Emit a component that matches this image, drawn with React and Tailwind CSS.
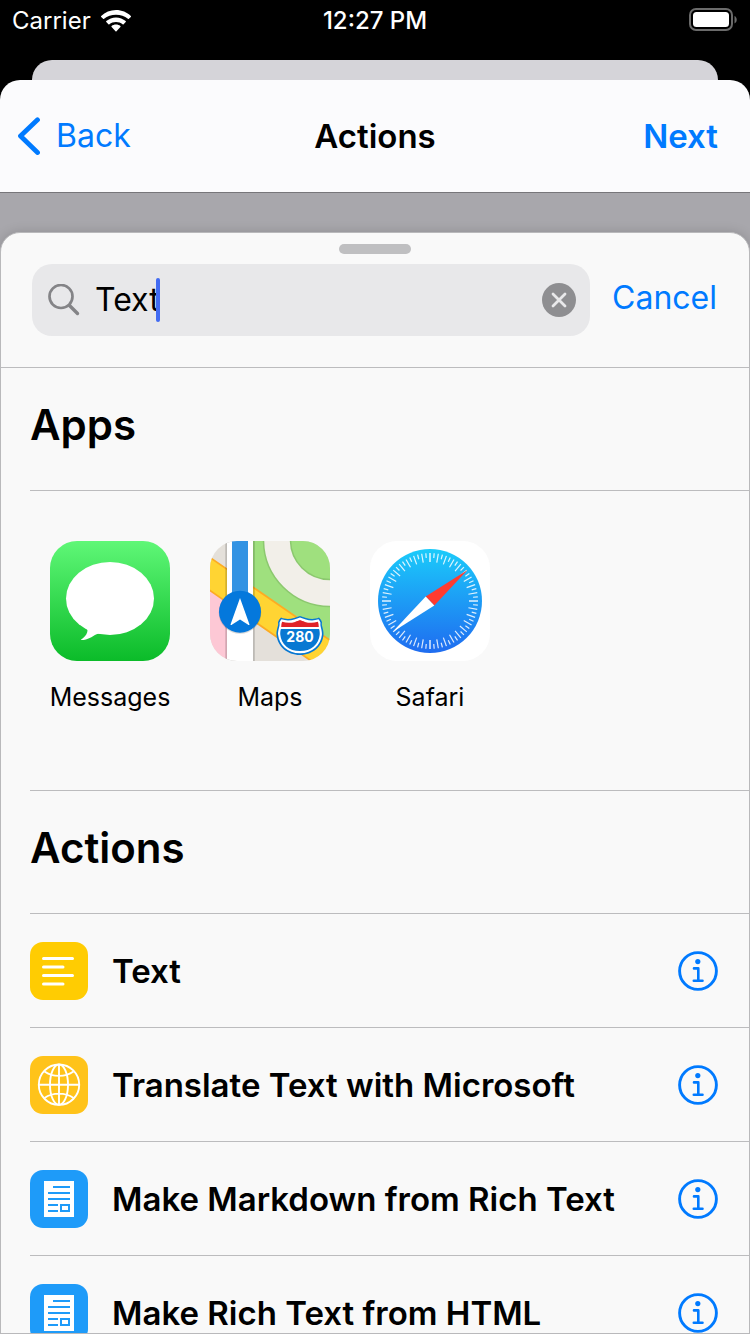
import { useState } from "react";

function WifiIcon() {
  return (
    <svg width="30" height="22" viewBox="0 0 30 22" fill="#fff" aria-hidden="true">
      <path d="M15 0C9.300 0 4 2.200 0.200 5.900a0.700 0.700 0 0 0 0 1l1.900 1.900a0.700 0.700 0 0 0 1 0C6.300 5.800 10.500 4.700 15 4.700s8.700 1.100 11.900 4.100a0.700 0.700 0 0 0 1 0l1.900-1.900a0.700 0.700 0 0 0 0-1C26 2.200 20.700 0 15 0Z" />
      <path d="M15 7.400c-3.700 0-7.100 1.400-9.700 3.700a0.700 0.700 0 0 0 0 1l2.100 2.100a0.700 0.700 0 0 0 1 0c1.800-1.600 4-2.300 6.600-2.300s4.800 0.700 6.600 2.300a0.700 0.700 0 0 0 1 0l2.100-2.100a0.700 0.700 0 0 0 0-1C22.100 8.800 18.700 7.400 15 7.400Z" />
      <path d="M15 14.600c-1.700 0-3.200 0.500-4.400 1.500a0.700 0.700 0 0 0 0 1l3.900 4.100a0.700 0.700 0 0 0 1 0l3.900-4.100a0.700 0.700 0 0 0 0-1c-1.200-1-2.700-1.500-4.400-1.500Z" />
    </svg>
  );
}

function BatteryIcon() {
  return (
    <svg width="49" height="24" viewBox="0 0 49 24" aria-hidden="true">
      <rect x="1" y="1" width="42" height="21" rx="6" fill="none" stroke="#6b6b6b" strokeWidth="2" />
      <rect x="4" y="4" width="36" height="15" rx="3.500" fill="#fff" />
      <path d="M45.500 8v7.500c1.400-0.600 2.200-2 2.200-3.700s-0.800-3.200-2.200-3.800Z" fill="#6b6b6b" />
    </svg>
  );
}

function SearchIcon() {
  return (
    <svg width="32" height="32" viewBox="0 0 32 32" fill="none" stroke="#848487" aria-hidden="true">
      <circle cx="13" cy="12.500" r="11.500" strokeWidth="2.700" />
      <path d="M21.500 21.500 29.500 29.500" strokeWidth="3.400" strokeLinecap="round" />
    </svg>
  );
}

function InfoIcon() {
  return (
    <svg width="40" height="40" viewBox="0 0 40 40" fill="none" stroke="#007aff" aria-hidden="true">
      <circle cx="20" cy="20" r="18.400" strokeWidth="2.900" />
      <circle cx="19.800" cy="10.600" r="2.600" fill="#007aff" stroke="none" />
      <path d="M16 17.400h4.300v12.300M15.800 29.700h8.700" strokeWidth="2.600" strokeLinecap="round" strokeLinejoin="round" />
    </svg>
  );
}

function MessagesIcon() {
  return (
    <svg width="120" height="120" viewBox="0 0 120 120" aria-hidden="true">
      <defs>
        <linearGradient id="msg" x1="0" y1="0" x2="0" y2="1">
          <stop offset="0" stopColor="#5ff777" />
          <stop offset="1" stopColor="#0bbb29" />
        </linearGradient>
      </defs>
      <rect width="120" height="120" rx="27" fill="url(#msg)" />
      <ellipse cx="60" cy="57.500" rx="44" ry="36.500" fill="#fff" />
      <path d="M35 86c2.400 1.700 2.900 3 2.200 5.200-0.900 3-3.200 5.600-6 7.200-0.500 0.300-0.300 0.700 0.300 0.700 6.500-0.300 10.500-3.500 14.500-5.700 1.300-0.700 2.300-0.900 4-0.500L48 84Z" fill="#fff" />
    </svg>
  );
}

function MapsIcon() {
  return (
    <svg width="120" height="120" viewBox="0 0 120 120" aria-hidden="true">
      <defs>
        <clipPath id="mapClip">
          <rect width="120" height="120" rx="27" />
        </clipPath>
      </defs>
      <g clipPath="url(#mapClip)">
        <rect width="120" height="120" fill="#e4e0da" />
        <path d="M43 0h77v99.500L43 46Z" fill="#9fe07e" />
        <circle cx="120" cy="-1" r="53" fill="none" stroke="#8cc86f" strokeWidth="28.500" />
        <circle cx="120" cy="-1" r="53" fill="none" stroke="#f2efe9" strokeWidth="25.500" />
        <path d="M0 49h17v71H0Z" fill="#fdc8d5" />
        <path d="M-2 15.100 122 100.700v33.700L-2 48.100Z" fill="#ffd433" stroke="#fdab23" strokeWidth="1.700" />
        <path d="M15.300 0h29.500v120H15.300Z" fill="#000" fillOpacity="0.170" />
        <path d="M17 0h26v120H17Z" fill="#fff" />
        <path d="M22 0h16v60H22Z" fill="#3393e3" />
        <circle cx="30" cy="71.500" r="21.300" fill="#000" fillOpacity="0.150" />
        <circle cx="30" cy="70.700" r="21" fill="#0478dc" />
        <path d="M30 57 39.500 83.500Q39 84.500 37.800 83.500L30 78.500 22.200 83.500Q21 84.500 20.500 83.500Z" fill="#fff" />
        <path d="M71 76.500c4.200 1.900 9 1.700 13 0.400 2.200-0.700 4-1.400 6-2 2 0.600 3.800 1.300 6 2 4 1.300 8.800 1.500 13-0.400 1.500 1.500 2.500 3 3 5-1 3 2 7 1.500 12.500C112.500 105 103 114 90 114S67.500 105 66.500 94C66 88.500 69 84.500 68 81.500c0.500-2 1.500-3.500 3-5Z" fill="#0878d2" />
        <path d="M71.500 78.300c4.500 1.600 9 1.300 12.700 0.100 2.200-0.700 3.800-1.300 5.800-1.900 2 0.600 3.600 1.200 5.800 1.900 3.700 1.200 8.200 1.500 12.700-0.100 1 1.200 1.600 2.200 2 3.400-0.700 3.500 1.800 7.300 1.400 12C111 103.500 102.500 112.300 90 112.300S69 103.500 68.100 93.700c-0.400-4.700 2.100-8.500 1.400-12 0.400-1.200 1-2.200 2-3.400Z" fill="#fff" />
        <path d="M72.200 80.800c4.600 1.500 9.200 1.200 12.800 0.100 2-0.600 3.300-1.200 5-1.800 1.700 0.600 3 1.200 5 1.800 3.600 1.100 8.200 1.400 12.800-0.100 0.900 1.700 0.800 3.300 1 5.200H71.200c0.200-1.900 0.100-3.500 1-5.200Z" fill="#e02328" />
        <path d="M70.900 88h38.200c0.500 1.800 0.800 3.500 0.600 5.700-0.800 9.300-8.500 16.400-19.700 16.400s-18.900-7.100-19.700-16.400c-0.200-2.200 0.100-3.900 0.600-5.700Z" fill="#0878d2" />
        <text x="90" y="101" textAnchor="middle" fontFamily="Inter, sans-serif" fontWeight="700" fontSize="14" fill="#fff">280</text>
      </g>
    </svg>
  );
}

function SafariIcon() {
  const ticks = Array.from({ length: 72 }, (_, i) => i);
  return (
    <svg width="120" height="120" viewBox="0 0 120 120" aria-hidden="true">
      <defs>
        <linearGradient id="saf" x1="0" y1="0" x2="0" y2="1">
          <stop offset="0" stopColor="#1bcbfa" />
          <stop offset="1" stopColor="#1f6cf0" />
        </linearGradient>
      </defs>
      <rect width="120" height="120" rx="27" fill="#fff" />
      <circle cx="60" cy="60" r="52" fill="url(#saf)" />
      {ticks.map((i) => (
        <path
          key={i}
          d={i % 2 === 0 ? "M60 12V21" : "M60 12V16.800"}
          stroke="#fff"
          strokeOpacity={i % 18 === 0 ? 0.65 : 0.85}
          strokeWidth={i % 18 === 0 ? 2 : 1.2}
          transform={`rotate(${i * 5} 60 60)`}
        />
      ))}
      <path d="M97.500 29 55.700 55.500 64.300 64.500Z" fill="#ff3b30" />
      <path d="M22.500 91 55.700 55.500 64.300 64.500Z" fill="#fff" />
    </svg>
  );
}

function TextGlyph() {
  return (
    <svg width="58" height="58" viewBox="0 0 58 58" aria-hidden="true">
      <rect width="58" height="58" rx="13" fill="#ffcc02" />
      <path d="M13.500 16.500h29M13.500 25h19.500M13.500 33.500h29M13.500 42h19.500" stroke="#fff" strokeWidth="3" strokeLinecap="round" />
    </svg>
  );
}

function GlobeGlyph() {
  return (
    <svg width="58" height="58" viewBox="0 0 58 58" aria-hidden="true">
      <rect width="58" height="58" rx="13" fill="#ffc31a" />
      <g fill="none" stroke="#fff" strokeWidth="1.900">
        <circle cx="29" cy="28.700" r="20.200" />
        <ellipse cx="29" cy="28.700" rx="9" ry="20.200" />
        <path d="M29 8.500v40.400M8.800 28.700h40.400M14.500 15.500c8.200 5.800 20.800 5.800 29 0M14.500 42c8.200-5.800 20.800-5.800 29 0" />
      </g>
    </svg>
  );
}

function DocumentGlyph() {
  return (
    <svg width="58" height="58" viewBox="0 0 58 58" aria-hidden="true">
      <rect width="58" height="58" rx="13" fill="#1e9bf9" />
      <path d="M14 11h30v36H14Z" fill="#fff" />
      <path d="M23 17h17M18 23h22M18 29h22M18 35h10M18 41h10M31 35h8v6h-8Z" fill="none" stroke="#1e9bf9" strokeWidth="2" />
    </svg>
  );
}

const apps = [
  { name: "Messages", Icon: MessagesIcon },
  { name: "Maps", Icon: MapsIcon },
  { name: "Safari", Icon: SafariIcon },
];

const actions = [
  { name: "Text", Icon: TextGlyph },
  { name: "Translate Text with Microsoft", Icon: GlobeGlyph },
  { name: "Make Markdown from Rich Text", Icon: DocumentGlyph },
  { name: "Make Rich Text from HTML", Icon: DocumentGlyph },
];

export default function App() {
  const [query, setQuery] = useState("Text");
  return (
    <div className="flex h-screen flex-col overflow-hidden bg-black font-[Inter,sans-serif] text-black">
      <div className="grid h-[60px] shrink-0 grid-cols-3 items-start px-3 pt-2 text-[24px] leading-[26px] text-white">
        <div className="flex items-center gap-[10px]">
          <span>Carrier</span>
          <WifiIcon />
        </div>
        <time className="text-center font-medium">12:27 PM</time>
        <div className="flex justify-end">
          <BatteryIcon />
        </div>
      </div>

      <div className="mx-8 h-5 shrink-0 rounded-t-[20px] bg-[#d5d4d9]" />

      <header className="grid h-[113px] shrink-0 grid-cols-3 items-center rounded-t-[20px] border-b border-[#77767a] bg-[#fbfbfd] px-4 text-[33px] leading-10">
        <button className="flex items-center gap-4 text-[32px] text-[#007aff]">
          <svg width="24" height="38" viewBox="0 0 24 38" fill="none" stroke="#007aff" strokeWidth="4.800" strokeLinecap="round" strokeLinejoin="round" aria-hidden="true">
            <path d="M21.500 2.800 4.500 19l17 16.500" />
          </svg>
          Back
        </button>
        <h1 className="text-center font-semibold">Actions</h1>
        <button className="pr-4 text-right font-semibold text-[#007aff]">Next</button>
      </header>

      <div className="flex min-h-0 flex-1 flex-col bg-[#a8a7ac] pt-[39px]">
        <main className="min-h-0 flex-1 overflow-hidden rounded-t-[20px] border border-[#b9b9bb] bg-[#f9f9f9] shadow-[0_0_12px_rgba(0,0,0,0.15)]">
          <div className="border-b border-[#bcbcbe] pt-[11px] pb-[31px]">
            <div className="mx-auto h-[10px] w-[72px] rounded-full bg-[#bfbfc1]" />
            <div className="mt-[10px] flex items-center gap-[22px] pr-8 pl-[31px]">
              <div className="relative flex h-[72px] min-w-0 flex-1 items-center gap-[15px] rounded-[20px] bg-[#e8e8ea] pr-[14px] pl-4">
                <SearchIcon />
                <input
                  type="text"
                  aria-label="Search"
                  value={query}
                  onChange={(e) => setQuery(e.target.value)}
                  className="min-w-0 flex-1 bg-transparent text-[32px] leading-10 outline-none"
                />
                <span className="absolute left-[124px] h-11 w-1 rounded-full bg-[#426bf2]" />
                <button aria-label="Clear" onClick={() => setQuery("")}>
                  <svg width="34" height="34" viewBox="0 0 34 34" aria-hidden="true">
                    <circle cx="17" cy="17" r="17" fill="#8e8e91" />
                    <path d="m11 11 12 12M23 11 11 23" stroke="#e8e8ea" strokeWidth="2.800" strokeLinecap="round" />
                  </svg>
                </button>
              </div>
              <button className="pb-1 text-[32px] leading-10 text-[#007aff]">Cancel</button>
            </div>
          </div>

          <section className="pl-[29px]">
            <h2 className="flex h-[123px] items-center border-b border-[#bcbcbe] pb-2 text-[42px] leading-[50px] font-semibold">Apps</h2>
            <ul className="flex h-[300px] border-b border-[#bcbcbe] pt-[50px]">
              {apps.map(({ name, Icon }) => (
                <li key={name} className="w-40">
                  <button className="flex w-full flex-col items-center gap-5 text-[25px] leading-8">
                    <Icon />
                    {name}
                  </button>
                </li>
              ))}
            </ul>
          </section>

          <section className="pl-[29px]">
            <h2 className="flex h-[123px] items-center border-b border-[#bcbcbe] pb-2 text-[42px] leading-[50px] font-semibold">Actions</h2>
            <ul>
              {actions.map(({ name, Icon }) => (
                <li key={name} className="flex h-[114px] items-center border-b border-[#bcbcbe] pr-[31px]">
                  <button className="flex min-w-0 flex-1 items-center gap-6 text-left text-[33px] leading-10 font-semibold">
                    <Icon />
                    {name}
                  </button>
                  <button aria-label={`About ${name}`}>
                    <InfoIcon />
                  </button>
                </li>
              ))}
            </ul>
          </section>
        </main>
      </div>
    </div>
  );
}
